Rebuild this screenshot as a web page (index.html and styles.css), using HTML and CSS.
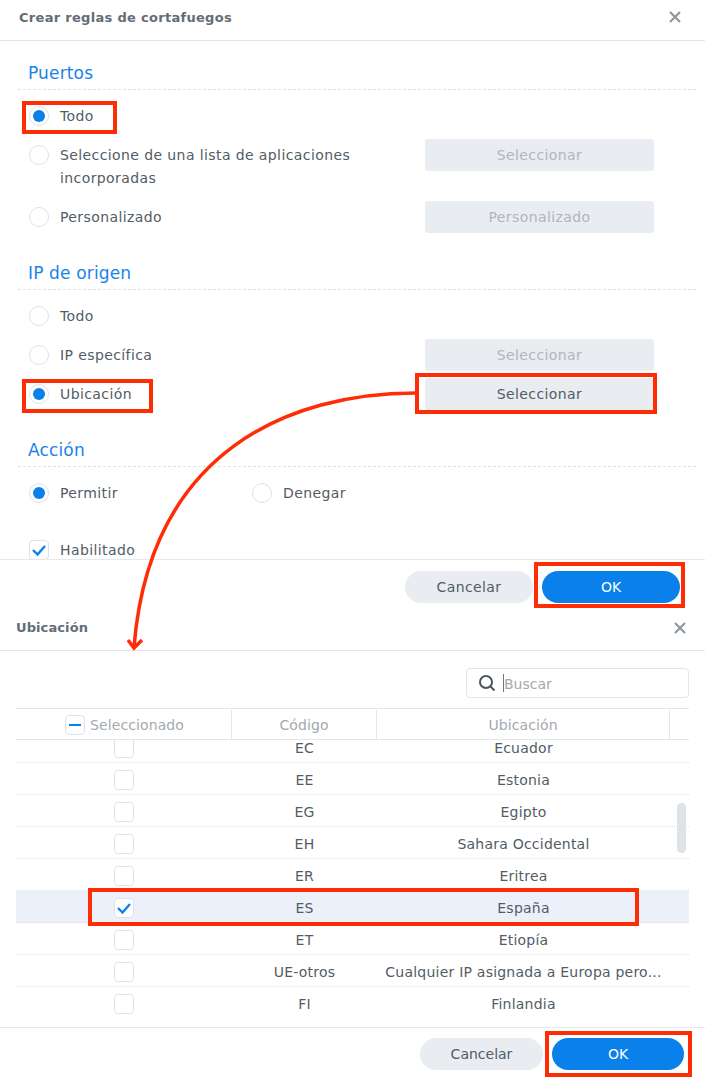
FILE: index.html
```html
<!DOCTYPE html>
<html lang="es">
<head>
  <meta charset="UTF-8" />
  <title>Crear reglas de cortafuegos</title>
  <link rel="stylesheet" href="styles.css">
</head>
<body>

  <div class="page">

    <div class="dialog">
      <div class="dialog-head">
        <span class="dialog-title">Crear reglas de cortafuegos</span>
        <svg class="close-icon" width="12" height="12" viewBox="0 0 12 12"><path d="M1 1L11 11M11 1L1 11"/></svg>
      </div>

      <div class="form-body">
        <div class="section-title">Puertos</div>
        <div class="form-row">
          <span class="radio checked"></span>
          <span class="opt-label">Todo</span>
        </div>
        <div class="form-row tall">
          <span class="radio"></span>
          <span class="opt-label">Seleccione de una lista de aplicaciones incorporadas</span>
          <button class="btn-wide disabled">Seleccionar</button>
        </div>
        <div class="form-row">
          <span class="radio"></span>
          <span class="opt-label">Personalizado</span>
          <button class="btn-wide disabled">Personalizado</button>
        </div>

        <div class="section-title">IP de origen</div>
        <div class="form-row">
          <span class="radio"></span>
          <span class="opt-label">Todo</span>
        </div>
        <div class="form-row">
          <span class="radio"></span>
          <span class="opt-label">IP específica</span>
          <button class="btn-wide disabled">Seleccionar</button>
        </div>
        <div class="form-row">
          <span class="radio checked"></span>
          <span class="opt-label">Ubicación</span>
          <button class="btn-wide">Seleccionar</button>
        </div>

        <div class="section-title">Acción</div>
        <div class="form-row">
          <span class="radio checked"></span>
          <span class="opt-label short">Permitir</span>
          <span class="radio"></span>
          <span class="opt-label">Denegar</span>
        </div>
        <div class="form-row enabled-row">
          <span class="check checked">
            <svg width="16" height="16" viewBox="0 0 16 16"><path d="M2 8L6.5 12.5L14 4"/></svg>
          </span>
          <span class="opt-label">Habilitado</span>
        </div>
      </div>

      <div class="dialog-foot first-foot">
        <button class="btn-pill cancel first-cancel">Cancelar</button>
        <button class="btn-pill primary first-ok">OK</button>
      </div>
    </div>

    <div class="dialog">
      <div class="dialog-head second-head">
        <span class="dialog-title">Ubicación</span>
        <svg class="close-icon" width="12" height="12" viewBox="0 0 12 12"><path d="M1 1L11 11M11 1L1 11"/></svg>
      </div>

      <div class="search-bar">
        <div class="search-box">
          <svg width="18" height="18" viewBox="0 0 18 18"><circle cx="8" cy="8" r="6"/><path d="M12.5 12.5L16.5 16.5"/></svg>
          <span class="caret"></span>
          <span class="search-hint">Buscar</span>
        </div>
      </div>

      <div class="grid-wrap">
        <div class="grid-head">
          <div class="col-sel">
            <span class="check"><i class="minus"></i></span>
            <span>Seleccionado</span>
          </div>
          <div class="col-code">Código</div>
          <div class="col-loc">Ubicación</div>
          <div class="col-end"></div>
        </div>

        <div class="grid-body">
          <div class="grid-rows">
            <div class="grid-row"><div class="col-sel"><span class="check"></span></div><div class="col-code">EC</div><div class="col-loc">Ecuador</div></div>
            <div class="grid-row"><div class="col-sel"><span class="check"></span></div><div class="col-code">EE</div><div class="col-loc">Estonia</div></div>
            <div class="grid-row"><div class="col-sel"><span class="check"></span></div><div class="col-code">EG</div><div class="col-loc">Egipto</div></div>
            <div class="grid-row"><div class="col-sel"><span class="check"></span></div><div class="col-code">EH</div><div class="col-loc">Sahara Occidental</div></div>
            <div class="grid-row"><div class="col-sel"><span class="check"></span></div><div class="col-code">ER</div><div class="col-loc">Eritrea</div></div>
            <div class="grid-row selected"><div class="col-sel"><span class="check checked"><svg width="16" height="16" viewBox="0 0 16 16"><path d="M2 8L6.5 12.5L14 4"/></svg></span></div><div class="col-code">ES</div><div class="col-loc">España</div></div>
            <div class="grid-row"><div class="col-sel"><span class="check"></span></div><div class="col-code">ET</div><div class="col-loc">Etiopía</div></div>
            <div class="grid-row"><div class="col-sel"><span class="check"></span></div><div class="col-code">UE-otros</div><div class="col-loc">Cualquier IP asignada a Europa pero...</div></div>
            <div class="grid-row"><div class="col-sel"><span class="check"></span></div><div class="col-code">FI</div><div class="col-loc">Finlandia</div></div>
          </div>
          <div class="scroll-thumb"></div>
        </div>
      </div>

      <div class="dialog-foot second-foot">
        <button class="btn-pill cancel second-cancel">Cancelar</button>
        <button class="btn-pill primary second-ok">OK</button>
      </div>
    </div>

    <!-- red annotations drawn over the screenshot -->
    <svg class="annotations" width="705" height="1080" viewBox="0 0 705 1080">
      <rect x="24" y="103" width="91" height="29"/>
      <rect x="24" y="381" width="127" height="30"/>
      <rect x="417" y="375" width="238" height="37"/>
      <rect x="536" y="564" width="147" height="42"/>
      <rect x="90" y="890" width="547" height="34"/>
      <rect x="547" y="1033" width="143" height="42"/>
      <path d="M416 393C290 393 150 450 134 647"/>
      <path d="M128 640L134 648L142 640"/>
    </svg>

  </div>

</body>
</html>
```

FILE: styles.css
```css
html, body {
  margin: 0;
  background-color: #fff;
  color: #525c66;
  font-family: "DejaVu Sans", sans-serif;
  font-size: 14px;
}

.page {
  position: relative;
  width: 705px;
  height: 1080px;
  overflow: hidden;
}

button {
  font-family: inherit;
  border: none;
  padding: 0;
}

.dialog-head {
  display: flex;
  align-items: center;
  justify-content: space-between;
  height: 34px;
  padding: 0 24px 6px 19px;
  border-bottom: 1px solid #e3e6e9;
}

.dialog-title {
  font-size: 13px;
  font-weight: bold;
  letter-spacing: 0.3px;
  color: #646d76;
}

.close-icon path {
  fill: none;
  stroke: #8f969d;
  stroke-width: 2.2;
}

.form-body {
  height: 518px;
  overflow: hidden;
  padding: 20px 9px 0 18px;
  box-sizing: border-box;
}

.section-title {
  height: 29px;
  margin-bottom: 10px;
  padding-left: 10px;
  box-sizing: border-box;
  font-size: 17px;
  line-height: 25px;
  letter-spacing: 0.15px;
  color: #1a83ea;
  border-bottom: 1px dashed #dfe3e8;
}

.form-row + .section-title {
  margin-top: 28px;
}

.form-row {
  display: flex;
  align-items: flex-start;
  height: 32px;
  margin-bottom: 7px;
  padding-left: 11px;
}

.form-row.tall {
  height: 55px;
}

.form-row.enabled-row {
  margin-top: 25px;
}

.radio {
  flex: none;
  width: 20px;
  height: 20px;
  margin-top: 6px;
  border: 1px solid #dde2e8;
  border-radius: 50%;
  box-sizing: border-box;
  background-color: #fff;
  position: relative;
}

.radio.checked::after {
  content: "";
  position: absolute;
  top: 3px;
  left: 3px;
  width: 12px;
  height: 12px;
  border-radius: 50%;
  background-color: #0a80ea;
}

.opt-label {
  flex: 1;
  margin-left: 11px;
  padding-top: 5px;
  font-size: 14px;
  line-height: 23px;
  letter-spacing: 0.4px;
}

.opt-label.short {
  flex: none;
  width: 192px;
}

.btn-wide {
  flex: none;
  width: 229px;
  height: 32px;
  margin-right: 42px;
  border-radius: 3px;
  font-size: 14px;
  letter-spacing: 0.4px;
  background-color: #e9ecf0;
  color: #525c66;
}

.btn-wide.disabled {
  color: #b1b6bb;
}

.check {
  display: inline-flex;
  align-items: center;
  justify-content: center;
  flex: none;
  width: 20px;
  height: 20px;
  border: 1px solid #dde2e8;
  border-radius: 4px;
  box-sizing: border-box;
  background-color: #fff;
}

.check path {
  fill: none;
  stroke: #0a80ea;
  stroke-width: 2.4;
}

.enabled-row .check {
  margin-top: 6px;
}

.minus {
  display: block;
  width: 12px;
  height: 2px;
  background-color: #0a80ea;
}

.dialog-foot {
  display: flex;
  justify-content: flex-end;
  box-sizing: border-box;
  border-top: 1px solid #e6e9ec;
}

.first-foot {
  height: 60px;
  padding: 11px 25px 0 0;
}

.second-foot {
  height: 53px;
  padding: 10px 21px 0 0;
}

.btn-pill {
  height: 32px;
  border-radius: 16px;
  font-size: 14px;
}

.btn-pill.cancel {
  background-color: #e9ecf0;
  color: #525c66;
}

.btn-pill.primary {
  background-color: #0a80ea;
  color: #fff;
}

.first-cancel {
  width: 128px;
  margin-right: 9px;
  letter-spacing: 0.4px;
}

.first-ok {
  width: 138px;
}

.second-cancel {
  width: 123px;
  margin-right: 9px;
}

.second-ok {
  width: 132px;
}

.second-head {
  height: 17px;
  padding: 0 19px 14px 16px;
}

.second-head .dialog-title {
  letter-spacing: 0.1px;
}

.search-bar {
  display: flex;
  justify-content: flex-end;
  padding: 17px 16px 0 0;
}

.search-box {
  display: flex;
  align-items: center;
  width: 223px;
  height: 30px;
  padding-left: 11px;
  border: 1px solid #e3e6ea;
  border-radius: 4px;
  box-sizing: border-box;
}

.search-box circle, .search-box path {
  fill: none;
  stroke: #4b545c;
  stroke-width: 2;
}

.caret {
  width: 1px;
  height: 18px;
  margin-left: 7px;
  background-color: #6d757d;
}

.search-hint {
  padding-top: 1px;
  font-size: 14px;
  color: #a3a9af;
}

.grid-wrap {
  margin: 10px 16px 0;
}

.grid-head, .grid-row {
  display: grid;
  grid-template-columns: 216px 145px 293px 19px;
  align-items: center;
  text-align: center;
}

.grid-head {
  height: 32px;
  box-sizing: border-box;
  border-top: 1px solid #e3e6ea;
  border-bottom: 1px solid #e3e6ea;
  padding-top: 1px;
  font-size: 14px;
  letter-spacing: 0.1px;
  color: #a3a9af;
}

.grid-head > div {
  height: 100%;
  display: flex;
  align-items: center;
  justify-content: center;
  border-right: 1px solid #e3e6ea;
}

.grid-head > .col-end {
  border-right: none;
}

.grid-head .col-sel {
  gap: 5px;
  justify-content: flex-end;
  padding-right: 47px;
}

.grid-body {
  position: relative;
  height: 287px;
  overflow: hidden;
}

.grid-rows {
  margin-top: -9px;
}

.grid-row {
  height: 32px;
  padding-top: 2px;
  box-sizing: border-box;
  border-bottom: 1px dotted #dfe3e6;
  font-size: 14px;
  letter-spacing: 0.22px;
}

.grid-row:last-child {
  border-bottom: none;
}

.grid-row.selected {
  background-color: #ebf0fb;
}

.grid-row .col-sel {
  display: flex;
  justify-content: flex-end;
  padding-right: 98px;
}

.scroll-thumb {
  position: absolute;
  top: 63px;
  right: 3px;
  width: 9px;
  height: 50px;
  border-radius: 5px;
  background-color: #dfe3e7;
}

.annotations {
  position: absolute;
  top: 0;
  left: 0;
  pointer-events: none;
}

.annotations rect, .annotations path {
  fill: none;
  stroke: #ff2d05;
  stroke-width: 4;
}

.annotations path {
  stroke-width: 3.5;
}
```
